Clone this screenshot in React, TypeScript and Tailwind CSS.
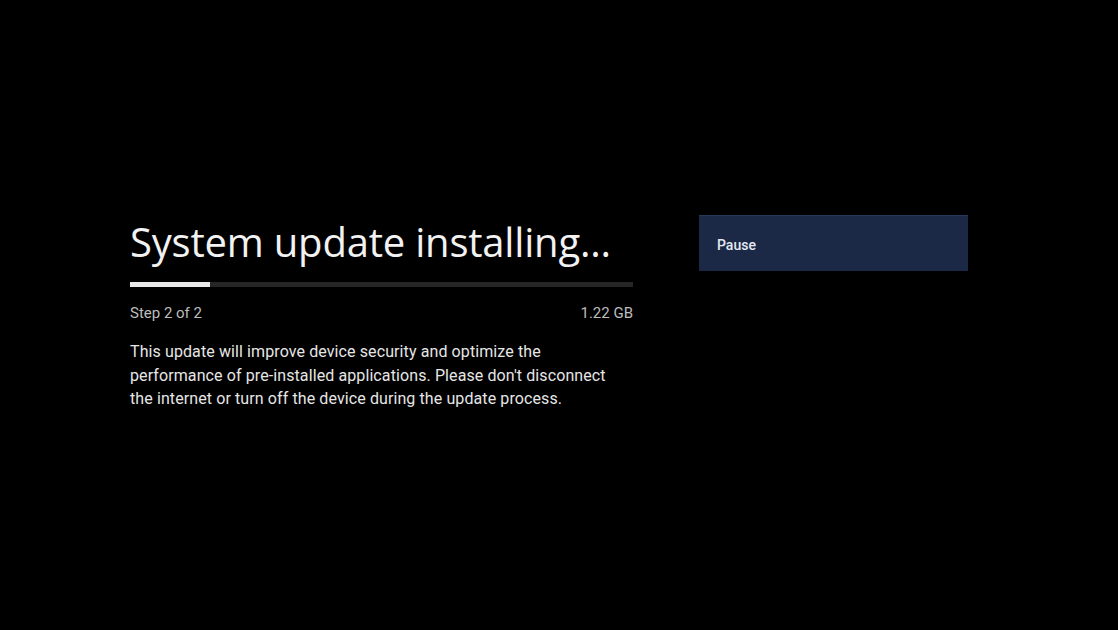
import React from 'react'

const progress = 16 // percent of the bar that is filled

function UpdateDetails() {
  return (
    <div className="w-[503px]">
      <h1 className="pt-[3px] text-[40px] leading-[48px] font-normal tracking-[-0.2px] text-[#f2f2f2] [font-family:'Open_Sans',Roboto,sans-serif]">
        System update installing...
      </h1>

      <div className="mt-[16px] h-[5px] w-full bg-[#262626]">
        <div className="h-full bg-[#e8e8e8]" style={{ width: `${progress}%` }} />
      </div>

      <div className="mt-[16px] flex items-center justify-between text-[15px] leading-[20px] text-[#bdbdbd]">
        <span>Step 2 of 2</span>
        <span>1.22 GB</span>
      </div>

      <p className="mt-[17px] max-w-[490px] text-[16px] leading-[23.5px] tracking-[0.1px] text-[#e6e6e6]">
        This update will improve device security and optimize the performance of pre-installed
        applications. Please don't disconnect the internet or turn off the device during the
        update process.
      </p>
    </div>
  )
}

export default function App() {
  return (
    <div className="flex h-[630px] w-full items-start bg-black pl-[130px] pt-[215px] [font-family:Roboto,'Liberation_Sans',sans-serif]">
      <UpdateDetails />
      <div className="ml-[66px] w-[269px]">
        <button
          type="button"
          className="flex h-[56px] w-full items-center border-t border-[#26375a] bg-[#1b2946] px-[18px] pt-[4px] text-left text-[14px] font-medium text-[#e3e9f3]"
        >
          Pause
        </button>
      </div>
    </div>
  )
}
